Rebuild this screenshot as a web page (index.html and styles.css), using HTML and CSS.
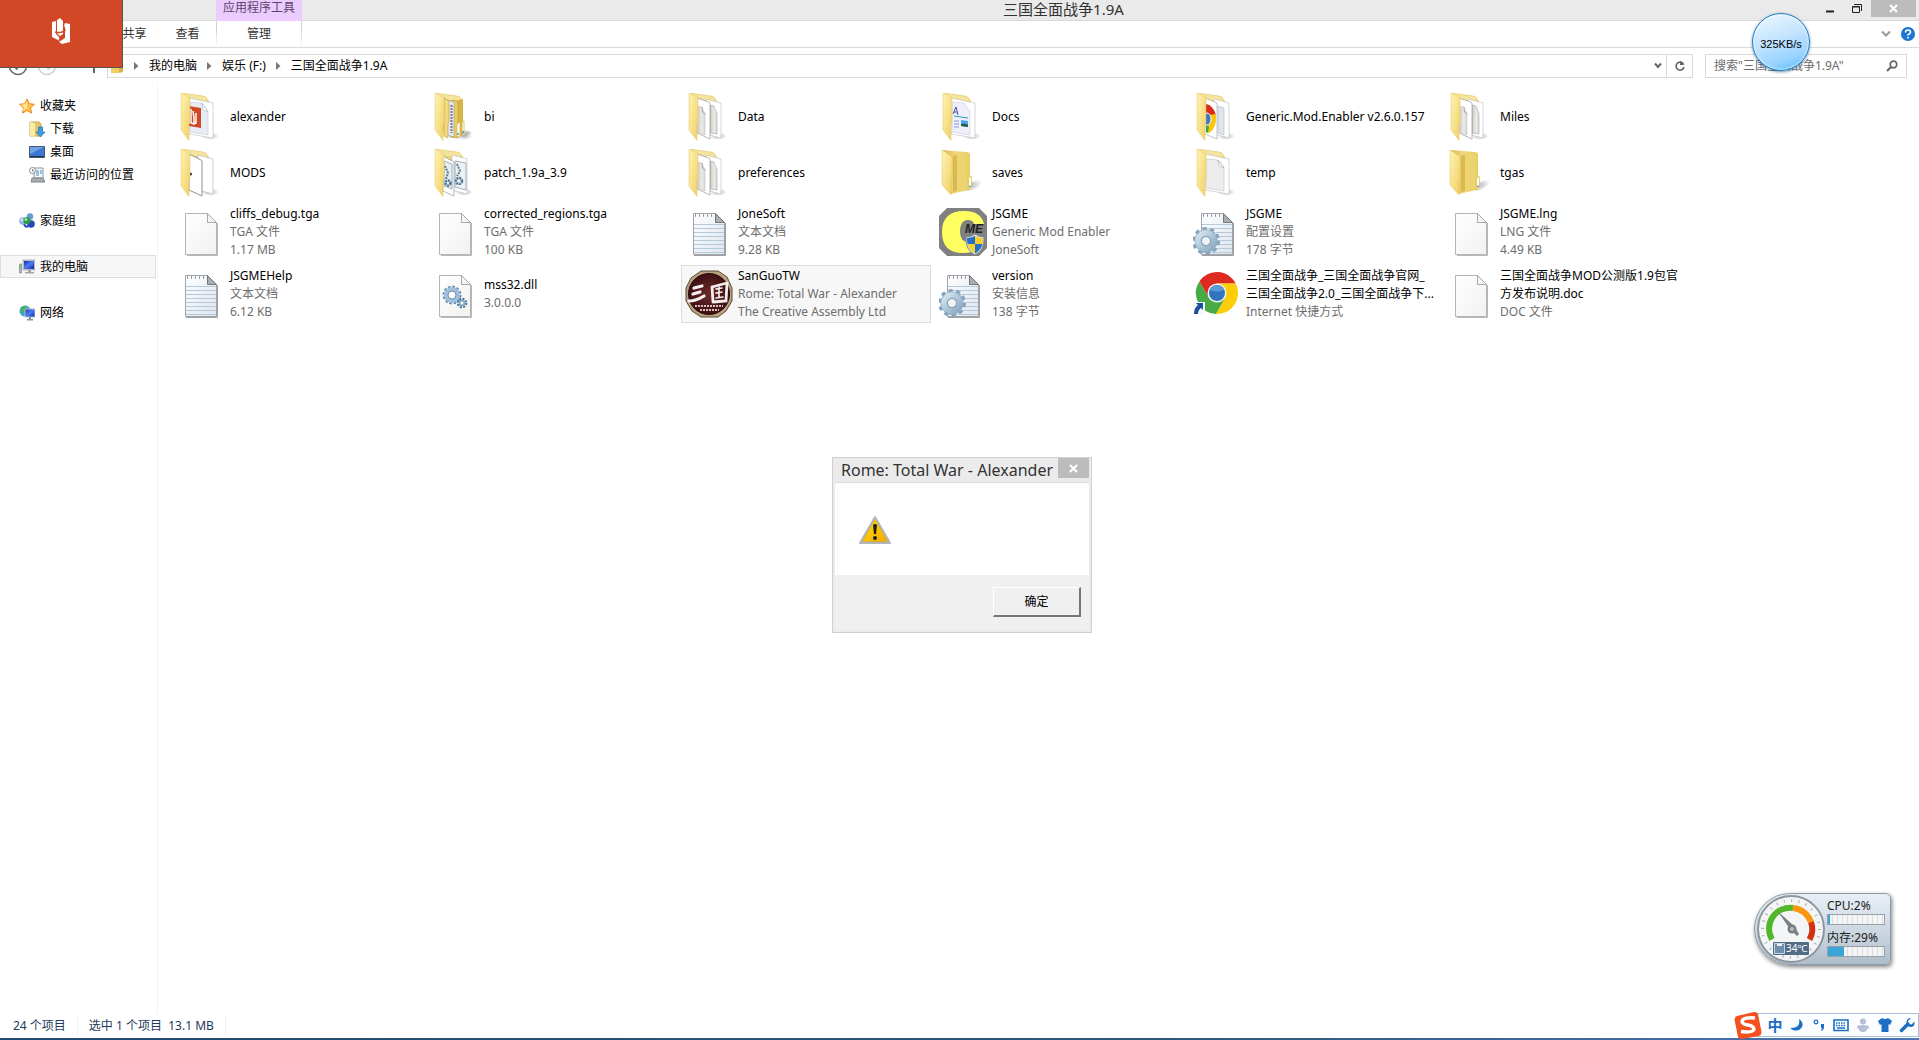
FILE: index.html
```html
<!DOCTYPE html>
<html lang="zh-CN">
<head>
    <meta charset="UTF-8">
    <meta name="viewport" content="width=device-width, initial-scale=1.0">
    <title>三国全面战争1.9A</title>
    <link rel="stylesheet" href="styles.css">
</head>
<body>
    <!-- 图标定义 -->
    <svg class="defs" width="0" height="0" aria-hidden="true">
        <defs>
            <linearGradient id="flapFill" x1="0" x2="1" y1="0" y2="1">
                <stop offset="0" stop-color="#fff3b4"/><stop offset="1" stop-color="#f0cf62"/>
            </linearGradient>
            <linearGradient id="backFill" x1="0" x2="1">
                <stop offset="0" stop-color="#d9b84f"/><stop offset=".5" stop-color="#f0d67c"/><stop offset="1" stop-color="#e8cf5e"/>
            </linearGradient>
            <linearGradient id="paperFill" x1="0" x2="1" y1="0" y2="1">
                <stop offset="0" stop-color="#fff"/><stop offset="1" stop-color="#f1f1f0"/>
            </linearGradient>
            <linearGradient id="sheetFill" x1="0" x2="1">
                <stop offset="0" stop-color="#cfcac0"/><stop offset=".6" stop-color="#eceae6"/><stop offset="1" stop-color="#d5d7dc"/>
            </linearGradient>
            <linearGradient id="noteFill" x1="0" x2="1" y1="0" y2="1">
                <stop offset="0" stop-color="#fdfeff"/><stop offset="1" stop-color="#dfe5ef"/>
            </linearGradient>
            <linearGradient id="gearFill" x1="0" x2="1" y1="0" y2="1">
                <stop offset="0" stop-color="#d6e6f1"/><stop offset="1" stop-color="#8aa9c2"/>
            </linearGradient>
            <linearGradient id="screenFill" x1="0" x2="1" y1="0" y2="1">
                <stop offset="0" stop-color="#1330b8"/><stop offset=".5" stop-color="#4c7df0"/><stop offset="1" stop-color="#0c1f9c"/>
            </linearGradient>
            <radialGradient id="shade"><stop offset="0" stop-color="#777" stop-opacity=".6"/><stop offset="1" stop-color="#999" stop-opacity="0"/></radialGradient>
            <radialGradient id="redFill"><stop offset="0" stop-color="#6d2a2a"/><stop offset="1" stop-color="#3d0f12"/></radialGradient>
        </defs>

        <symbol id="folder-back" viewBox="0 0 48 48">
            <ellipse cx="33" cy="43" rx="9" ry="4" fill="url(#shade)"/>
            <path d="M4 0l22 3q3 .4 3.500 2L32 8v30L13 41z" fill="url(#backFill)"/>
            <path d="M4 0l22 3q3 .4 3.500 2L31 9 13 7z" fill="#f5e49b" stroke="#dfc66c" stroke-width=".5"/>
        </symbol>
        <symbol id="folder-flap" viewBox="0 0 48 48">
            <path d="M4 .5Q4 0 5 .5L12 4q1 .6 1 2v24l-1 1v16.500L4 37z" fill="url(#flapFill)" stroke="#e2c765" stroke-width=".5"/>
        </symbol>
        <symbol id="folder-empty" viewBox="0 0 48 48">
            <path d="M31 34l14-6q-3 10-14 14-8 2-17 1z" fill="url(#shade)"/>
            <path d="M3 1l25 2q3 .4 3 3v34q0 1-2 1l-17 4z" fill="url(#backFill)"/>
            <path d="M14 7l13-3q1 0 1 2v34l-14 2z" fill="#edd470"/>
            <path d="M14 7l4-1v36l-4 1z" fill="#d3ae45" fill-opacity=".7"/>
            <path d="M29 27q3-1 3.500 1v10q0 2-3 3z" fill="#f3dc7e" stroke="#d6b954" stroke-width=".5"/>
            <rect x="30" y="29" width="2" height="10" rx="1" fill="#fff"/><circle cx="31" cy="37.500" r="1" fill="#4a9be0"/>
            <path d="M3 1.500Q3 1 4 1.500L12 7q1 .6 1 2v21l-1 1v15L3 36z" fill="url(#flapFill)" stroke="#e2c765" stroke-width=".5"/>
        </symbol>
        <symbol id="folder-one" viewBox="0 0 48 48">
            <use href="#folder-back"/>
            <path d="M12 5l24 5v35l-24-4z" fill="#fff" stroke="#c4c4c4" stroke-width=".7"/>
            <path d="M13 10l12 1 6 7v24l-18-3z" fill="#ededed" stroke="#c4c4c4" stroke-width=".6"/>
            <path d="M25 11l1 6 5 2z" fill="#fff" stroke="#999" stroke-width=".5"/>
            <use href="#folder-flap"/>
        </symbol>
        <symbol id="folder-two" viewBox="0 0 48 48">
            <use href="#folder-back"/>
            <path d="M21 6l15 4v35l-15-4z" fill="#fff" stroke="#c4c4c4" stroke-width=".7"/>
            <path d="M25 12l4 1 3 8v20l-7-1z" fill="url(#sheetFill)" stroke="#999" stroke-width=".5"/>
            <path d="M12 5l12 4q1 .5 1 2v35l-13-6z" fill="#fff" stroke="#999" stroke-width=".7"/>
            <path d="M12 13l5 1 3 7v21l-8-3z" fill="url(#sheetFill)" stroke="#bbb" stroke-width=".5"/>
            <path d="M17 14l.5 5 3 2" fill="none" stroke="#888" stroke-width=".6"/>
            <use href="#folder-flap"/>
        </symbol>
        <symbol id="folder-mods" viewBox="0 0 48 48">
            <use href="#folder-back"/>
            <path d="M21 6l15 4v35l-15-4z" fill="#fff" stroke="#bbb" stroke-width=".7"/>
            <path d="M12 5l12 6q1 .5 1 2v34l-13-6z" fill="#fff" stroke="#777" stroke-width=".8"/>
            <circle cx="13.500" cy="25" r="1.500" fill="#333"/>
            <use href="#folder-flap"/>
        </symbol>
        <symbol id="folder-ppt" viewBox="0 0 48 48">
            <use href="#folder-back"/>
            <path d="M12 5l24 5v35l-24-4z" fill="#fff" stroke="#c4c4c4" stroke-width=".7"/>
            <path d="M13 9l12 1 6 8v24l-18-3z" fill="#e8ecf2" stroke="#c4cad2" stroke-width=".6"/>
            <path d="M25 10l1 7 5 2z" fill="#fff" stroke="#9fb4c4" stroke-width=".6"/>
            <path d="M12 13l12 2v20l-12-2z" fill="#d24726"/>
            <path d="M14 16v14l3 1v-6l-1-7M19 20v10l-3 1" fill="none" stroke="#fff" stroke-width="1.500"/>
            <use href="#folder-flap"/>
        </symbol>
        <symbol id="folder-docs" viewBox="0 0 48 48">
            <use href="#folder-back"/>
            <path d="M12 5l24 5v35l-24-4z" fill="#fff" stroke="#c4c4c4" stroke-width=".7"/>
            <path d="M13 9l12 1 6 8v24l-18-3z" fill="#eeeffa" stroke="#ccd" stroke-width=".6"/>
            <path d="M14 21l3-7 2 8M15 19h3" fill="none" stroke="#4252a8"/>
            <path d="M15 23l14 2" stroke="#2c9ac0"/><path d="M15 28h5M15 31h5M15 34h5" stroke="#8d97dc"/>
            <path d="M22 27l7 1v6l-7-1z" fill="#4aa4ea"/><path d="M22 31q4-1 7 1v2l-7-1z" fill="#225c44"/>
            <use href="#folder-flap"/>
        </symbol>
        <symbol id="folder-sub" viewBox="0 0 48 48">
            <path d="M30 36l12 3q-3 4-12 5z" fill="url(#shade)"/>
            <use href="#folder-back"/>
            <path d="M24 8l8-2v36l-8 3z" fill="#d6b646"/>
            <path d="M19 8l5-1 3 2v36l-8-1z" fill="#e9cd67" stroke="#b59534" stroke-width=".6"/>
            <path d="M16 7l7 2v35l-7-2z" fill="#e8e9ef" stroke="#888" stroke-width=".5"/>
            <path d="M20.500 12v28" stroke="#777b85" stroke-width="2" stroke-dasharray="2 1"/>
            <path d="M13 5l5 3v21l-1 2v14l-4-2z" fill="#f1d97e" stroke="#b99b3c" stroke-width=".6"/>
            <path d="M26 31l3-2v14l-3 1zM31 29l2-1v12l-2 1z" fill="#fff" stroke="#d4b440" stroke-width=".8"/>
            <circle cx="27" cy="41" r="1" fill="#3a8ad8"/><circle cx="32" cy="39" r="1" fill="#3a8ad8"/>
            <use href="#folder-flap"/>
        </symbol>
        <symbol id="folder-patch" viewBox="0 0 48 48">
            <use href="#folder-back"/>
            <path d="M21 6l15 4v35l-15-4z" fill="#fff" stroke="#c4c4c4" stroke-width=".7"/>
            <path d="M24 12l11 2v27l-11-3z" fill="#eef1f4" stroke="#9fb0be"/>
            <circle cx="28" cy="32" r="3" fill="none" stroke="#4f7896" stroke-width="2.500" stroke-dasharray="2 .8"/>
            <path d="M26 15l3 7-3 5" fill="none" stroke="#5b7c94" stroke-width="2" stroke-dasharray="2 1"/>
            <path d="M12 7l11 6v34l-11-5z" fill="#fff" stroke="#999" stroke-width=".7"/>
            <path d="M13 12l8 3v25l-8-3z" fill="#e8edf1" stroke="#9fb0be"/>
            <path d="M14 17l3 7-2 6" fill="none" stroke="#5b7c94" stroke-width="2" stroke-dasharray="2 1"/>
            <circle cx="17" cy="34" r="2.500" fill="none" stroke="#4f7896" stroke-width="2.500" stroke-dasharray="2 .8"/>
            <use href="#folder-flap"/>
        </symbol>
        <symbol id="folder-chrome" viewBox="0 0 48 48">
            <use href="#folder-back"/>
            <path d="M21 6l15 4v35l-15-4z" fill="#fff" stroke="#c4c4c4" stroke-width=".7"/>
            <path d="M25 13l6 2v27l-6-2z" fill="#dde6f2" stroke="#aaa" stroke-width=".5"/>
            <path d="M12 5l12 5v36l-12-5z" fill="#fff" stroke="#aaa" stroke-width=".7"/>
            <path d="M13 11q7 1 10 11l-6 1-4 1z" fill="#dc2a1e"/>
            <path d="M16 22l7-1q1 15-7 19l-3-1z" fill="#fcc70a"/>
            <path d="M13 30l3 4-1 6-2-1z" fill="#3ea83c"/>
            <ellipse cx="14" cy="26" rx="4" ry="6" fill="#3878c4" stroke="#fff"/>
            <use href="#folder-flap"/>
        </symbol>

        <symbol id="file-blank" viewBox="0 0 48 48">
            <path d="M10 47.500h30.500V15" fill="none" stroke="#888" stroke-opacity=".6"/>
            <path d="M8.500 5.500h22l9 9v32h-31z" fill="url(#paperFill)" stroke="#b4b4b4"/>
            <path d="M30.500 5.500v9h9z" fill="#f5f5f5" stroke="#a6a6a6"/>
        </symbol>
        <symbol id="file-text" viewBox="0 0 48 48">
            <path d="M9 47.500h31.500V15" fill="none" stroke="#777" stroke-opacity=".7"/>
            <path d="M8.500 5.500h22l9 9v32h-31z" fill="url(#noteFill)" stroke="#a0a4aa"/>
            <path d="M9 16.500h30M9 20.500h30M9 24.500h30M9 28.500h30M9 32.500h30M9 36.500h30M9 40.500h30M9 44.500h30" stroke="#b4cadb"/>
            <path d="M10 7.500h21" stroke="#8a8f96" stroke-width="2.500" stroke-dasharray="1 3"/>
            <path d="M30.500 5.500v9h9z" fill="#a9aeb4" stroke="#777"/>
        </symbol>
        <symbol id="file-config" viewBox="0 0 48 48">
            <use href="#file-text"/>
            <circle cx="13" cy="33" r="12" fill="none" stroke="#86a3ba" stroke-width="4" stroke-dasharray="4 3.540"/>
            <circle cx="13" cy="33" r="8" fill="none" stroke="#8fabc1" stroke-width="7"/>
            <circle cx="13" cy="33" r="8" fill="none" stroke="url(#gearFill)" stroke-width="5.500"/>
            <circle cx="13" cy="33" r="4.500" fill="#eef3f8" stroke="#7f9bb2"/>
        </symbol>
        <symbol id="file-dll" viewBox="0 0 48 48">
            <use href="#file-blank"/>
            <circle cx="21" cy="25" r="8" fill="none" stroke="#6d8da6" stroke-width="3" stroke-dasharray="2.500 1.690"/>
            <circle cx="21" cy="25" r="6" fill="none" stroke="#9cc0de" stroke-width="4"/>
            <circle cx="21" cy="25" r="4" fill="#fff" stroke="#55728a" stroke-width=".8"/>
            <circle cx="31" cy="33" r="4" fill="none" stroke="#4c6c86" stroke-width="2.500" stroke-dasharray="1.800 1.340"/>
            <circle cx="31" cy="33" r="2.500" fill="#fff" stroke="#83abc9" stroke-width="2.200"/>
        </symbol>
        <symbol id="app-sanguo" viewBox="0 0 48 48">
            <path d="M16 1h17l9 6 5 11v13l-6 10-8 6H16L7 41 1 31V18L6 8z" fill="#b7a382" stroke="#5f4a36"/>
            <circle cx="24" cy="24" r="20.500" fill="url(#redFill)" stroke="#2c0a0c"/>
            <g fill="none" stroke="#f4efee" stroke-linecap="round">
                <path d="M9 18l8-2M8 24l7-2M4 31q7 0 15-5" stroke-width="3.200"/>
                <path d="M27 17l1 15M27 17l15-4-1 18-13 1" stroke-width="2.800"/>
                <path d="M31 19l6-1M31 23l6-1M34 17v10M31 28l7-1" stroke-width="1.600"/>
            </g>
            <path d="M10 36h28M15 40h19" stroke="#d9c2bf" stroke-width="2" stroke-dasharray="2 1"/>
        </symbol>
        <symbol id="app-chrome" viewBox="0 0 48 48">
            <g transform="translate(24 23)">
                <path d="M-17.600-11.500A21 21 0 0 1 18.700-9.500H0L-8.200 4.750z" fill="#dd2b22"/>
                <path d="M18.700-9.500A21 21 0 0 1-1.100 21L8.200 4.750 0-9.500z" fill="#fdcd07"/>
                <path d="M-1.100 21A21 21 0 0 1-17.600-11.500L-8.200 4.750H8.200z" fill="#47aa45"/>
                <circle r="9.500" fill="#f4f4f4"/><circle r="8" fill="#2f74bd"/>
                <path d="M-7-3a7.500 7.500 0 0 1 14 0q-7 3-14 0z" fill="#5b9ad6"/>
            </g>
            <rect y="32" width="12" height="12" fill="#f4fafe"/>
            <path d="M3 33h7v7L8 38q-3 2-3 6H1q0-6 4-9z" fill="#1b4f9b"/>
        </symbol>
    </svg>

    <div class="window">
        <header class="title-bar">
            <div class="context-title">应用程序工具</div>
            <h1>三国全面战争1.9A</h1>
            <div class="window-buttons">
                <button type="button" aria-label="最小化"><svg width="10" height="18"><path d="M1 10.500h8" stroke="#222" stroke-width="2"/></svg></button>
                <button type="button" aria-label="还原"><svg width="12" height="18"><path d="M1.500 5.500h7v6h-7zM3 3.500h7.500V10M1 6h8" fill="none" stroke="#222"/></svg></button>
                <button type="button" class="close" aria-label="关闭"><svg width="9" height="9"><path d="M1 1l7 7M8 1L1 8" stroke="#fff" stroke-width="2"/></svg></button>
            </div>
        </header>

        <nav class="ribbon">
            <button type="button">共享</button>
            <button type="button">查看</button>
            <button type="button" class="context-tab">管理</button>
            <span class="spacer"></span>
            <button type="button" class="icon-button" aria-label="展开功能区"><svg width="10" height="8"><path d="M1 1.500l4 4 4-4" fill="none" stroke="#999" stroke-width="2"/></svg></button>
            <button type="button" class="icon-button" aria-label="帮助"><svg width="14" height="14"><circle cx="7" cy="7" r="7" fill="#1a76d2"/><path d="M4.500 5.500q0-2.500 2.500-2.500t2.500 2.200Q9.500 6.500 7 7.800v.8M7 9.800v1.700" fill="none" stroke="#fff" stroke-width="1.600"/></svg></button>
        </nav>

        <div class="address-row">
            <div class="nav-buttons">
                <button type="button" aria-label="后退"><svg width="20" height="20"><circle cx="10" cy="10" r="8.500" fill="none" stroke="#6a6a6a" stroke-width="1.500"/><path d="M14 10H6M9.500 6.500L6 10l3.500 3.500" fill="none" stroke="#6a6a6a" stroke-width="2"/></svg></button>
                <button type="button" aria-label="前进"><svg width="20" height="20"><circle cx="10" cy="10" r="8.500" fill="none" stroke="#d0d0d0" stroke-width="1.500"/><path d="M6 10h8M10.500 6.500L14 10l-3.500 3.500" fill="none" stroke="#d0d0d0" stroke-width="2"/></svg></button>
                <button type="button" class="up" aria-label="上移"><svg width="10" height="14"><path d="M5 14V2M1 6l4-4 4 4" fill="none" stroke="#666" stroke-width="2"/></svg></button>
            </div>
            <div class="address">
                <svg class="address-icon" width="14" height="16"><path d="M1 2h7l1 2v11H1z" fill="#f0d164"/><path d="M9 4l4 1v9l-4 1z" fill="#d9b33f"/><path d="M11 3h2v6h-2z" fill="#4db0c8"/></svg>
                <svg class="arrow" width="5" height="8"><path d="M0 0l4.500 4L0 8z" fill="#777"/></svg>
                <a href="#">我的电脑</a>
                <svg class="arrow" width="5" height="8"><path d="M0 0l4.500 4L0 8z" fill="#777"/></svg>
                <a href="#">娱乐 (F:)</a>
                <svg class="arrow" width="5" height="8"><path d="M0 0l4.500 4L0 8z" fill="#777"/></svg>
                <a href="#">三国全面战争1.9A</a>
                <span class="spacer"></span>
                <button type="button" class="drop" aria-label="历史地址"><svg width="8" height="8"><path d="M1 1.500l3 3.500 3-3.500" fill="none" stroke="#666" stroke-width="2"/></svg></button>
                <button type="button" class="refresh" aria-label="刷新"><svg width="12" height="12"><path d="M9.500 4A4 4 0 1 0 10 7" fill="none" stroke="#666" stroke-width="1.600"/><path d="M6 .500v4.500h4.500z" fill="#666"/></svg></button>
            </div>
            <div class="search">
                <input type="search" aria-label="搜索" placeholder='搜索"三国全面战争1.9A"'>
                <svg width="12" height="12"><circle cx="7.500" cy="4.500" r="3.300" fill="none" stroke="#666" stroke-width="1.700"/><path d="M5 7l-4 4" stroke="#666" stroke-width="2.200"/></svg>
            </div>
        </div>

        <div class="content">
            <aside class="sidebar">
                <ul>
                    <li><a href="#"><svg width="16" height="16"><path d="M8 .8l2.200 4.900 5.300.6-4 3.600 1.100 5.200L8 12.400l-4.600 2.700 1.100-5.200-4-3.600 5.300-.6z" fill="#ffc24a" stroke="#ec8b22"/><path d="M8 3v7l-4 3 1-4-3-2 4-1z" fill="#ffe59a"/></svg>收藏夹</a></li>
                    <li class="child"><a href="#"><svg width="16" height="16"><path d="M1 1h9l2 2v12H1z" fill="#e5c76b" stroke="#c9a646"/><path d="M1 1l5 1v14l-5-1z" fill="#fbe9a6"/><path d="M9.500 6h4v5H16l-4.500 5L7 11h2.500z" fill="#3aa0ea" stroke="#1c6bb5" stroke-width=".7"/></svg>下载</a></li>
                    <li class="child"><a href="#"><svg width="16" height="16"><path d="M.5 2.500h15v11H.5z" fill="#3c78cf" stroke="#49566b"/><path d="M1 3h14L1 10z" fill="#6fa2e6"/><path d="M1 12.500h14" stroke="#22344f"/></svg>桌面</a></li>
                    <li class="child"><a href="#"><svg width="16" height="16"><path d="M5 1h9v10H5z" fill="#f6f8fa" stroke="#8d949c"/><path d="M7 4h3M7 6h3M7 8h3M11 4h2M11 6h2" stroke="#3f8cc4"/><path d="M3 11h11l2 4H2z" fill="#a6abb1" stroke="#7f868d"/><circle cx="3.500" cy="3.500" r="3" fill="#fff" stroke="#858c93"/><path d="M3.500 2v2H5" fill="none" stroke="#666" stroke-width=".8"/></svg>最近访问的位置</a></li>
                </ul>
                <ul>
                    <li><a href="#"><svg width="16" height="16"><circle cx="4" cy="8" r="3.800" fill="#8fb4e8"/><circle cx="11" cy="3.500" r="3.200" fill="#6c98dc"/><circle cx="12" cy="11" r="3.800" fill="#2748b8"/><circle cx="8" cy="7.500" r="3.600" fill="#2c9a45"/><circle cx="7" cy="6.500" r="1.500" fill="#9be0a0"/><circle cx="3" cy="7" r="1.300" fill="#d9e8fb"/><path d="M5 11q2 4 4 2" stroke="#2a52c4" stroke-width="2" fill="none"/></svg>家庭组</a></li>
                </ul>
                <ul>
                    <li class="current"><a href="#"><svg width="16" height="16"><path d="M.5 5h2v9h-2z" fill="#b5bac0" stroke="#777" stroke-width=".6"/><path d="M1 6v4" stroke="#4c4" /><path d="M4 1h12v10H4z" fill="#c9ccd1" stroke="#8c9096" stroke-width=".6"/><path d="M5 2h10v8H5z" fill="url(#screenFill)"/><path d="M9 11h3v2h3v1.500H6V13h3z" fill="#9fa4aa"/></svg>我的电脑</a></li>
                </ul>
                <ul>
                    <li><a href="#"><svg width="16" height="16"><circle cx="6" cy="6" r="5.500" fill="#3aa2d8"/><path d="M2 3q3-3 6-2L6 5 4 9Q1 7 2 3z" fill="#46b45c"/><path d="M6 4h10v8H6z" fill="url(#screenFill)" stroke="#b7bdc6"/><path d="M10 12h2v2h2v1.500H8V14h2z" fill="#8b9199"/></svg>网络</a></li>
                </ul>
            </aside>

            <main class="files">
                <a href="#" class="item"><svg><use href="#folder-ppt"/></svg><span class="label"><b>alexander</b></span></a>
                <a href="#" class="item"><svg><use href="#folder-sub"/></svg><span class="label"><b>bi</b></span></a>
                <a href="#" class="item"><svg><use href="#folder-two"/></svg><span class="label"><b>Data</b></span></a>
                <a href="#" class="item"><svg><use href="#folder-docs"/></svg><span class="label"><b>Docs</b></span></a>
                <a href="#" class="item"><svg><use href="#folder-chrome"/></svg><span class="label"><b>Generic.Mod.Enabler v2.6.0.157</b></span></a>
                <a href="#" class="item"><svg><use href="#folder-two"/></svg><span class="label"><b>Miles</b></span></a>

                <a href="#" class="item"><svg><use href="#folder-mods"/></svg><span class="label"><b>MODS</b></span></a>
                <a href="#" class="item"><svg><use href="#folder-patch"/></svg><span class="label"><b>patch_1.9a_3.9</b></span></a>
                <a href="#" class="item"><svg><use href="#folder-two"/></svg><span class="label"><b>preferences</b></span></a>
                <a href="#" class="item"><svg><use href="#folder-empty"/></svg><span class="label"><b>saves</b></span></a>
                <a href="#" class="item"><svg><use href="#folder-one"/></svg><span class="label"><b>temp</b></span></a>
                <a href="#" class="item"><svg><use href="#folder-empty"/></svg><span class="label"><b>tgas</b></span></a>

                <a href="#" class="item"><svg><use href="#file-blank"/></svg><span class="label"><b>cliffs_debug.tga</b><span>TGA 文件</span><span>1.17 MB</span></span></a>
                <a href="#" class="item"><svg><use href="#file-blank"/></svg><span class="label"><b>corrected_regions.tga</b><span>TGA 文件</span><span>100 KB</span></span></a>
                <a href="#" class="item"><svg><use href="#file-text"/></svg><span class="label"><b>JoneSoft</b><span>文本文档</span><span>9.28 KB</span></span></a>
                <a href="#" class="item">
                    <svg viewBox="0 0 48 48">
                        <path d="M8 0h32l8 8v32l-8 8H8l-8-8V8z" fill="#808080"/>
                        <path d="M45 16Q42 3 25 3 3 3 3 24q0 21 21 21 9 0 14-3V31q-4 3-8 3-9 0-9-10 0-12 8-12 5 0 6 4z" fill="#ffff62"/>
                        <text x="26" y="25" class="me-text">ME</text>
                        <path d="M36 26q4 3 9 3 1 13-9 18-10-5-9-18 5 0 9-3z" fill="#dfe6ec" stroke="#7f8a94"/>
                        <path d="M36 28v8h-7.500q-.500-3-.400-6Q32 30 36 28zM36 36h7.500q-1.500 6-7.500 9.500z" fill="#2370c8"/>
                        <path d="M36 28q4 2 7.900 2 .1 3-.400 6H36zM36 36v9.500Q30 42 28.500 36z" fill="#f9cf2e"/>
                    </svg>
                    <span class="label"><b>JSGME</b><span>Generic Mod Enabler</span><span>JoneSoft</span></span>
                </a>
                <a href="#" class="item"><svg><use href="#file-config"/></svg><span class="label"><b>JSGME</b><span>配置设置</span><span>178 字节</span></span></a>
                <a href="#" class="item"><svg><use href="#file-blank"/></svg><span class="label"><b>JSGME.lng</b><span>LNG 文件</span><span>4.49 KB</span></span></a>

                <a href="#" class="item"><svg><use href="#file-text"/></svg><span class="label"><b>JSGMEHelp</b><span>文本文档</span><span>6.12 KB</span></span></a>
                <a href="#" class="item"><svg><use href="#file-dll"/></svg><span class="label"><b>mss32.dll</b><span>3.0.0.0</span></span></a>
                <a href="#" class="item selected"><svg><use href="#app-sanguo"/></svg><span class="label"><b>SanGuoTW</b><span>Rome: Total War - Alexander</span><span>The Creative Assembly Ltd</span></span></a>
                <a href="#" class="item"><svg><use href="#file-config"/></svg><span class="label"><b>version</b><span>安装信息</span><span>138 字节</span></span></a>
                <a href="#" class="item"><svg><use href="#app-chrome"/></svg><span class="label"><b>三国全面战争_三国全面战争官网_<br>三国全面战争2.0_三国全面战争下...</b><span>Internet 快捷方式</span></span></a>
                <a href="#" class="item"><svg><use href="#file-blank"/></svg><span class="label"><b>三国全面战争MOD公测版1.9包官<br>方发布说明.doc</b><span>DOC 文件</span></span></a>
            </main>
        </div>

        <footer class="status-bar">
            <span>24 个项目</span>
            <span>选中 1 个项目&nbsp; 13.1 MB</span>
        </footer>
        <div class="taskbar"></div>
    </div>

    <div class="launcher">
        <svg width="20" height="28" viewBox="0 0 20 28"><path d="M1 5l4-1v13l3 3 1 4-8-4zM6 3l3-2 3 3v13l-3 2-3-3zM14 6l5 1v18l-8 2-3-2 6-4V10l-1-1z" fill="#fff"/><path d="M4 15q8 2 10-3-1 8-6 11" fill="none" stroke="#d24726" stroke-width="1.500"/></svg>
    </div>

    <div class="speed-ball">325KB/s</div>

    <section class="dialog" role="dialog" aria-labelledby="dialogTitle">
        <div class="dialog-title">
            <h2 id="dialogTitle">Rome: Total War - Alexander</h2>
            <button type="button" class="dialog-close" aria-label="关闭"><svg width="9" height="9"><path d="M1 1l7 7M8 1L1 8" stroke="#fff" stroke-width="2"/></svg></button>
        </div>
        <div class="dialog-body">
            <svg width="32" height="30" viewBox="0 0 32 30">
                <defs><linearGradient id="warnFill" x1="0" x2="1" y1="0" y2="1"><stop offset="0" stop-color="#ffe500"/><stop offset="1" stop-color="#f5a400"/></linearGradient></defs>
                <path d="M16 2L31 28H1z" fill="#c9ccd0" stroke="#b2b5ba" stroke-width="2" stroke-linejoin="round"/>
                <path d="M16 4.500L28.500 26.500h-25z" fill="url(#warnFill)" stroke="#d8a000" stroke-width=".6"/>
                <path d="M14 10q2-2 4 0l-1 9h-2z" fill="#1c1c28"/><circle cx="16" cy="23" r="2" fill="#1c1c28"/>
            </svg>
        </div>
        <div class="dialog-footer"><button type="button" class="ok">确定</button></div>
    </section>

    <section class="monitor">
        <svg width="72" height="72" viewBox="0 0 72 72">
            <circle cx="37" cy="36" r="33" fill="#f4f5f6" stroke="#8d969e" stroke-width="2"/>
            <circle cx="37" cy="36" r="28.500" fill="none" stroke="#aab0b5" stroke-width="3" stroke-dasharray="1 6.460"/>
            <path d="M18 46.500A21 21 0 0 1 39 15" fill="none" stroke="#52b72a" stroke-width="6"/>
            <path d="M39 15a21 21 0 0 1 18 14" fill="none" stroke="#fb9612" stroke-width="6"/>
            <path d="M57 29a21 21 0 0 1-1.500 17.500" fill="none" stroke="#cf3310" stroke-width="6"/>
            <path d="M23.500 18L40 33l5 8-2 2-7-7z" fill="#777d82"/><circle cx="38" cy="36" r="4.500" fill="#777d82"/><circle cx="38" cy="36" r="2" fill="#b9bdc0"/>
            <rect x="19" y="49" width="36" height="13" rx="1" fill="#526c88"/>
            <path d="M20.500 50.500h10v10h-10z" fill="#6f8dac" stroke="#c9d6e2"/><path d="M23 51h5v2h-5z" fill="#e8eef4"/>
            <text x="32" y="59" class="temp-text">34℃</text>
        </svg>
        <div class="meters">
            <label for="cpu">CPU:2%</label>
            <div class="meter" id="cpu"><div class="fill" style="width: 3%"></div></div>
            <label for="memory">内存:29%</label>
            <div class="meter" id="memory"><div class="fill" style="width: 29%"></div></div>
        </div>
    </section>

    <section class="ime">
        <svg class="ime-logo" width="28" height="28" viewBox="0 0 28 28"><path d="M3 5L20 1q3-.5 4 2l3.500 18q0 3-3 4L8 28q-3 .5-4-2L.5 8.500Q.500 6 3 5z" fill="#f4511e"/><path d="M21 7Q9 6 8 10.500 8 13 14 14t6 4.500Q18 22 7 20.500" fill="none" stroke="#fff" stroke-width="3.500"/></svg>
        <div class="ime-bar">
            <button type="button">中</button>
            <button type="button" aria-label="半角"><svg width="16" height="16"><path d="M10 2q5 3 3 8-3 5-9 3-2-1-2.500-2Q12 11 10 2z" fill="#1d6fc4"/></svg></button>
            <button type="button" aria-label="标点"><svg width="16" height="16"><circle cx="5" cy="5" r="1.800" fill="none" stroke="#1d6fc4" stroke-width="1.300"/><path d="M10 7h3v3q0 3-3 4l1-3h-1z" fill="#1d6fc4"/></svg></button>
            <button type="button" aria-label="软键盘"><svg width="16" height="14"><path d="M1 2h14v10.500H1z" fill="none" stroke="#1d6fc4" stroke-width="1.600"/><path d="M3 5h10M3 7.500h10" stroke="#1d6fc4" stroke-width="1.500" stroke-dasharray="1.500 1"/><path d="M4 10h8" stroke="#1d6fc4" stroke-width="1.500"/></svg></button>
            <button type="button" aria-label="账户"><svg width="16" height="16"><circle cx="8" cy="4.500" r="3" fill="#b3c0d6"/><path d="M2 10q0-2 6-2t6 2q0 2-2 2 0 3-4 3t-4-3q-2 0-2-2z" fill="#b3c0d6"/></svg></button>
            <button type="button" aria-label="皮肤"><svg width="16" height="16"><path d="M5 1q3 2 6 0l4 3-2 4-1.500-1v8h-7V7L3 8 1 4z" fill="#1d6fc4"/></svg></button>
            <button type="button" aria-label="工具"><svg width="16" height="16"><path d="M2.500 13.500L9 7" stroke="#1d6fc4" stroke-width="3.500" stroke-linecap="round"/><path d="M12 1L9 4l.5 3 3 .5 3-3q.5 5-3 5.500Q7 10 7.500 5 8 1 12 1z" fill="#1d6fc4"/></svg></button>
        </div>
    </section>
</body>
</html>
```
FILE: styles.css
```css
* {
    box-sizing: border-box;
}
body {
    margin: 0;
    background: #fff;
    color: #000;
    font-family: "Noto Sans", "Noto Sans CJK SC", sans-serif;
    font-size: 12px;
    line-height: 18px;
    overflow: hidden;
}
.defs {
    position: absolute;
}
a {
    color: inherit;
    text-decoration: none;
}
svg {
    flex: none;
}
button {
    display: flex;
    align-items: center;
    justify-content: center;
    padding: 0;
    border: none;
    background: none;
    color: inherit;
    font: inherit;
}
h1, h2 {
    margin: 0;
    font-weight: normal;
    color: #333;
}
.spacer {
    flex: 1;
}
.window {
    display: flex;
    flex-direction: column;
    height: 100vh;
}

/* 标题栏 */
.title-bar {
    display: flex;
    height: 21px;
    padding-left: 216px;
    background: #eaeaea;
    border-bottom: 1px solid #d9d9d9;
}
.context-title {
    width: 86px;
    height: 21px;
    line-height: 16px;
    text-align: center;
    background: #eccbff;
    color: #5c4468;
}
.title-bar h1 {
    flex: 1;
    font-size: 15px;
    text-align: center;
}
.window-buttons {
    display: flex;
    gap: 16px;
    padding-right: 3px;
}
.window-buttons .close {
    width: 45px;
    height: 17px;
    margin-left: -8px;
    background: #bcbcbc;
}

/* 功能区 */
.ribbon {
    display: flex;
    align-items: center;
    height: 27px;
    padding: 0 4px 0 108px;
    border-bottom: 1px solid #dadbdc;
    color: #333;
}
.ribbon button {
    width: 53px;
    height: 26px;
}
.ribbon .context-tab {
    width: 86px;
    margin-left: 2px;
    border: solid #d9d9d9;
    border-width: 0 1px;
    border-image: linear-gradient(#d0d0d0 30%, #fff) 1;
}
.ribbon .icon-button {
    width: 14px;
    margin-left: 8px;
}

/* 地址栏 */
.address-row {
    display: flex;
    gap: 12px;
    padding: 6px 12px 6px 8px;
}
.nav-buttons {
    display: flex;
    align-items: center;
    gap: 9px;
    width: 87px;
}
.nav-buttons .up {
    margin-left: 23px;
}
.address {
    display: flex;
    flex: 1;
    align-items: center;
    height: 24px;
    border: 1px solid #d9d9d9;
}
.address-icon {
    margin-left: 2px;
}
.arrow {
    margin: 0 10px;
}
.drop {
    width: 17px;
}
.refresh {
    width: 26px;
    height: 22px;
    border-left: 1px solid #d9d9d9;
}
.search {
    display: flex;
    align-items: center;
    width: 202px;
    padding: 0 8px;
    border: 1px solid #d9d9d9;
}
.search input {
    flex: 1;
    min-width: 0;
    padding: 0;
    border: none;
    outline: none;
    background: none;
    font: inherit;
}
.search input::placeholder {
    color: #6d6d6d;
    opacity: 1;
}

/* 主体 */
.content {
    display: flex;
    flex: 1;
    min-height: 0;
}
.sidebar {
    width: 158px;
    padding-top: 10px;
    padding-right: 1px;
    border-right: 1px solid #f3f3f3;
}
.sidebar ul {
    margin: 0 0 23px;
    padding: 0;
    list-style: none;
}
.sidebar li {
    padding-left: 18px;
    border: 1px solid transparent;
}
.sidebar li.child {
    padding-left: 28px;
}
.sidebar li.current {
    background: #f7f7f7;
    border-color: #dedede;
}
.sidebar a {
    display: flex;
    align-items: center;
    gap: 5px;
    height: 21px;
}
.files {
    display: grid;
    grid-template-columns: repeat(auto-fill, 250px);
    align-content: start;
    gap: 4px;
    flex: 1;
    padding: 7px 0 0 15px;
}
.item {
    display: flex;
    align-items: center;
    gap: 5px;
    min-height: 52px;
    padding: 1px 3px;
    border: 1px solid transparent;
}
.item svg {
    width: 48px;
    height: 48px;
}
.item.selected {
    background: #f7f7f7;
    border-color: #dedede;
}
.label {
    display: flex;
    flex-direction: column;
    white-space: nowrap;
    color: #6d6d6d;
}
.label b {
    font-weight: normal;
    color: #000;
}
.me-text {
    font: italic bold 12px "Liberation Sans", sans-serif;
    fill: #222;
}

/* 状态栏 */
.status-bar {
    display: flex;
    align-items: center;
    height: 24px;
    padding-left: 2px;
    color: #1e395b;
}
.status-bar span {
    padding: 0 11px;
    border-right: 1px solid #f0f0f0;
}
.taskbar {
    height: 2px;
    background: linear-gradient(to right, #1f4a72, #2c5775 60%, #4a76b8);
}

/* 浮动层 */
.launcher {
    position: absolute;
    top: 0;
    left: 0;
    display: flex;
    align-items: center;
    justify-content: center;
    width: 123px;
    height: 68px;
    padding-bottom: 6px;
    background: #d24726;
    border: solid #555;
    border-width: 0 1px 1px 0;
}
.speed-ball {
    position: absolute;
    top: 13px;
    right: 109px;
    width: 58px;
    height: 58px;
    border: 1px solid #1c7fc0;
    border-radius: 50%;
    background: linear-gradient(160deg, #f0f9ff, #c2e3ff 45%, #9ad3ff 75%, #4db8f5);
    box-shadow: 0 1px 3px rgba(0, 60, 110, 0.6), inset 0 0 3px #fff;
    font-family: "Liberation Sans", sans-serif;
    font-size: 11px;
    line-height: 60px;
    text-align: center;
}

/* 对话框 */
.dialog {
    position: absolute;
    top: 457px;
    left: 832px;
    width: 260px;
    padding: 0 2px 2px;
    background: #ebebeb;
    border: 1px solid #d0d0d0;
}
.dialog-title {
    display: flex;
    justify-content: space-between;
    height: 24px;
    padding-left: 6px;
}
.dialog-title h2 {
    font-size: 16px;
    line-height: 24px;
    white-space: nowrap;
}
.dialog-close {
    width: 31px;
    height: 20px;
    background: #bcbcbc;
}
.dialog-body {
    height: 93px;
    padding: 32px 24px;
    background: #fff;
    border-top: 1px solid #dcdcdc;
}
.dialog-footer {
    display: flex;
    justify-content: flex-end;
    height: 55px;
    padding: 12px 8px;
    background: #f0f0f0;
}
.ok {
    width: 88px;
    height: 30px;
    border: solid;
    border-width: 1px 2px 2px 1px;
    border-color: #fff #777 #777 #fff;
    background: #f0f0f0;
}

/* 系统监控 */
.monitor {
    position: absolute;
    right: 28px;
    bottom: 75px;
    display: flex;
    width: 137px;
    height: 72px;
    border: 1px solid #8b9aa8;
    border-radius: 36px 5px 5px 36px;
    background: linear-gradient(#e8eff6, #c9d4df 60%, #aebccb);
    box-shadow: 1px 2px 4px rgba(0, 0, 0, 0.5);
    color: #222;
}
.monitor svg {
    margin: -1px 0 0 -1px;
}
.temp-text {
    font: 10px "Noto Sans", "Noto Sans CJK SC", sans-serif;
    fill: #fff;
}
.meters {
    flex: 1;
    padding: 3px 5px 0 1px;
}
.meters label {
    display: block;
    height: 17px;
}
.meter {
    height: 11px;
    margin-bottom: 4px;
    border: 1px solid #98a0a7;
    background: repeating-linear-gradient(to right, #f4f4f4 0 4px, #dcdfe1 4px 5px);
}
.fill {
    height: 100%;
    background: #3aa6d8;
}

/* 输入法 */
.ime {
    position: absolute;
    right: 0;
    bottom: 1px;
    display: flex;
    align-items: center;
}
.ime-logo {
    z-index: 1;
    margin-right: -8px;
}
.ime-bar {
    display: flex;
    height: 24px;
    padding-left: 10px;
    background: #fbfdff;
    border: solid #a9c0d8;
    border-width: 1px 1px 1px 0;
}
.ime-bar button {
    width: 22px;
    color: #1d6fc4;
    font-size: 15px;
    font-weight: bold;
}
```
